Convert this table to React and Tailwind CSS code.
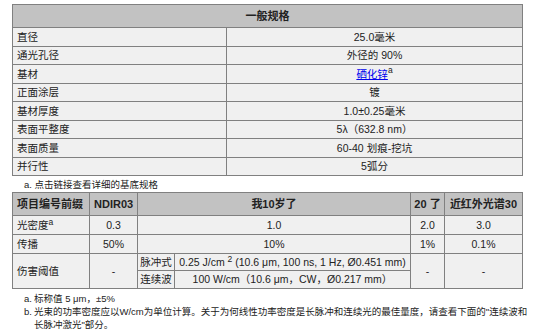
const font = { fontFamily: '"Liberation Sans", "Noto Sans CJK SC", sans-serif' };

const specs = [
  ['直径', '25.0毫米'],
  ['通光孔径', '外径的 90%'],
  ['基材', 'link'],
  ['正面涂层', '镀'],
  ['基材厚度', '1.0±0.25毫米'],
  ['表面平整度', '5λ（632.8 nm）'],
  ['表面质量', '60-40 划痕-挖坑'],
  ['并行性', '5弧分'],
];

const cell = 'border border-[#808080] px-[4px] py-0 leading-none whitespace-nowrap';
const tight = 'border border-[#808080] px-0 py-0 leading-none whitespace-nowrap';

export default function App() {
  return (
    <div className="min-h-screen bg-white pl-[12px] pt-[4px] text-[#222] text-[10.5px]" style={font}>
      <table className="w-[510px] table-fixed border-collapse">
        <colgroup>
          <col className="w-[214px]" />
          <col className="w-[296px]" />
        </colgroup>
        <thead>
          <tr className="h-[23px] bg-[#c2c2c2]">
            <th colSpan={2} className={`${cell} text-[11px] font-bold`}>一般规格</th>
          </tr>
        </thead>
        <tbody>
          {specs.map(([k, v]) => (
            <tr key={k} className="h-[18.5px] bg-[#f0f0f0]">
              <td className={`${cell} text-left`}>{k}</td>
              <td className={`${cell} text-center`}>
                {v === 'link' ? (
                  <>
                    <a href="#" className="text-[#0000ee] underline">硒化锌</a>
                    <sup className="text-[8.5px]">a</sup>
                  </>
                ) : v}
              </td>
            </tr>
          ))}
        </tbody>
      </table>

      <div className="h-[16px] pl-[12px] text-[9.5px] leading-[17px]">
        a. 点击链接查看详细的基底规格
      </div>

      <table className="w-[510px] table-fixed border-collapse">
        <colgroup>
          <col className="w-[77px]" />
          <col className="w-[48px]" />
          <col className="w-[37px]" />
          <col className="w-[236px]" />
          <col className="w-[34px]" />
          <col className="w-[78px]" />
        </colgroup>
        <thead>
          <tr className="h-[23px] bg-[#c2c2c2] text-[11px] font-bold">
            <th className={`${cell} text-left`}>项目编号前缀</th>
            <th className={`${cell} text-center`}>NDIR03</th>
            <th colSpan={2} className={`${cell} text-center`}>我10岁了</th>
            <th className={`${tight} text-center`}>20 了</th>
            <th className={`${tight} text-center`}>近红外光谱30</th>
          </tr>
        </thead>
        <tbody className="bg-[#f0f0f0]">
          <tr className="h-[19px]">
            <td className={`${cell} text-left`}>光密度<sup className="text-[8.5px]">a</sup></td>
            <td className={`${cell} text-center`}>0.3</td>
            <td colSpan={2} className={`${cell} text-center`}>1.0</td>
            <td className={`${tight} text-center`}>2.0</td>
            <td className={`${cell} text-center`}>3.0</td>
          </tr>
          <tr className="h-[19px]">
            <td className={`${cell} text-left`}>传播</td>
            <td className={`${cell} text-center`}>50%</td>
            <td colSpan={2} className={`${cell} text-center`}>10%</td>
            <td className={`${tight} text-center`}>1%</td>
            <td className={`${cell} text-center`}>0.1%</td>
          </tr>
          <tr className="h-[17px]">
            <td rowSpan={2} className={`${cell} text-left`}>伤害阈值</td>
            <td rowSpan={2} className={`${cell} text-center`}>-</td>
            <td className={`${tight} text-center`}>脉冲式</td>
            <td className={`${cell} text-center`}>
              0.25 J/cm <sup className="text-[8.5px]">2</sup> (10.6 μm, 100 ns, 1 Hz, Ø0.451 mm)
            </td>
            <td rowSpan={2} className={`${tight} text-center`}>-</td>
            <td rowSpan={2} className={`${cell} text-center`}>-</td>
          </tr>
          <tr className="h-[18px]">
            <td className={`${tight} text-center`}>连续波</td>
            <td className={`${cell} text-center`}>100 W/cm（10.6 μm，CW，Ø0.217 mm）</td>
          </tr>
        </tbody>
      </table>

      <div className="w-[518px] pt-[3px] text-[9.5px] leading-[13px]">
        <div className="flex">
          <span className="w-[22px] shrink-0 pl-[12px]">a.</span>
          <span>标称值 5 μm，±5%</span>
        </div>
        <div className="flex">
          <span className="w-[22px] shrink-0 pl-[12px]">b.</span>
          <span>光束的功率密度应以W/cm为单位计算。关于为何线性功率密度是长脉冲和连续光的最佳量度，请查看下面的"连续波和长脉冲激光"部分。</span>
        </div>
      </div>
    </div>
  );
}
